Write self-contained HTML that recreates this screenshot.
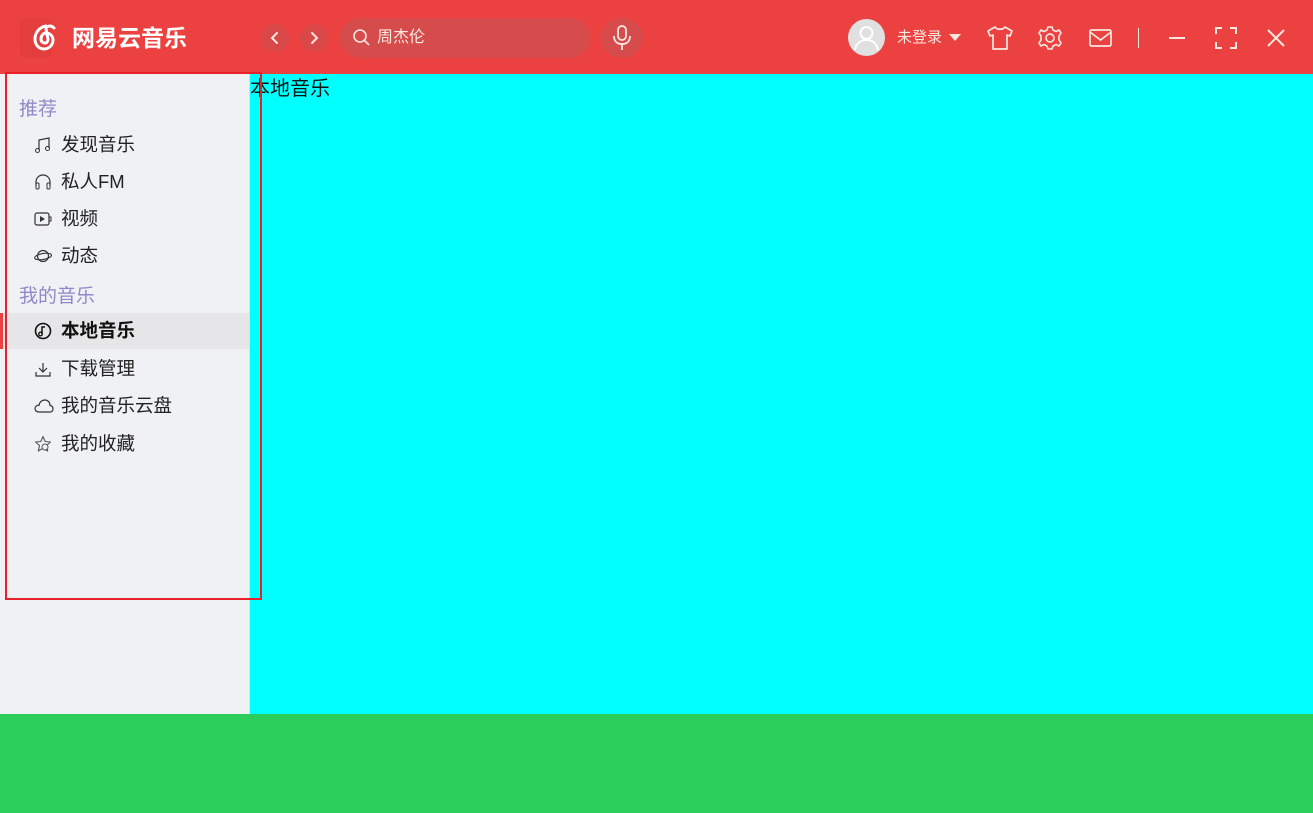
<!DOCTYPE html>
<html><head><meta charset="utf-8"><style>
*{margin:0;padding:0;box-sizing:border-box}
body{width:1313px;height:813px;overflow:hidden;position:relative;font-family:"Liberation Sans","Noto Sans CJK SC",sans-serif;background:#fff}
.hdr{position:absolute;left:0;top:0;width:1313px;height:74px;background:#ec4141}
.side{position:absolute;left:0;top:74px;width:250px;height:640px;background:#f0f1f5;border-right:1px solid #dcdde2}
.main{position:absolute;left:250px;top:74px;width:1063px;height:640px;background:#00ffff;font-size:20px;color:#111;line-height:30px}
.foot{position:absolute;left:0;top:714px;width:1313px;height:99px;background:#2bcd5b}
.box{position:absolute;left:5px;top:72px;width:257px;height:528px;border:2px solid #e8212b}
.abs{position:absolute}
.sec{position:absolute;left:19px;font-size:19px;color:#8e8ac7}
.it{position:absolute;left:0;width:249px;height:36px;font-size:18.5px;color:#222;line-height:36px}
.it svg{position:absolute;left:34px;top:9px}
.it span{position:absolute;left:61px}
.circ{position:absolute;border-radius:50%}
</style></head><body>
<div class="hdr">
 <div class="abs" style="left:20px;top:18px;width:32px;height:40px;background:#e33d3d;border-radius:6px"></div>
 <svg class="abs" style="left:30px;top:22px" width="30" height="32" viewBox="0 0 30 32"><path d="M16 4 C10 5 5 10 5 17 C5 23 9 27 14 27 C19 27 23 23 23 18 C23 14 20 11 16 11 C13 11 11 14 11 17 C11 20 13 21 15 21 C17 21 18 19 18 17 L16 7 C16 5 18 4 20 4 C22 4 23 5 24 6" fill="none" stroke="#fff" stroke-width="3" stroke-linecap="round"/></svg>
 <div class="abs" style="left:72px;top:24px;font-size:23px;color:#fff;font-weight:bold;line-height:28px">网易云音乐</div>
 <div class="circ" style="left:261px;top:24px;width:28px;height:28px;background:#d84848"></div>
 <div class="circ" style="left:300px;top:24px;width:28px;height:28px;background:#d84848"></div>
 <svg class="abs" style="left:261px;top:24px" width="28" height="28"><path d="M16 9 L11 14 L16 19" fill="none" stroke="#f7e9e0" stroke-width="2" stroke-linecap="round"/></svg>
 <svg class="abs" style="left:300px;top:24px" width="28" height="28"><path d="M12 9 L17 14 L12 19" fill="none" stroke="#f7e9e0" stroke-width="2" stroke-linecap="round"/></svg>
 <div class="abs" style="left:340px;top:18px;width:250px;height:40px;border-radius:20px;background:#d64b4b"></div>
 <svg class="abs" style="left:352px;top:28px" width="20" height="20"><circle cx="8" cy="8" r="6" fill="none" stroke="#f7e9e0" stroke-width="1.6"/><path d="M12.5 12.5 L17 17" stroke="#f7e9e0" stroke-width="1.6"/></svg>
 <div class="abs" style="left:377px;top:27px;font-size:16px;color:#f7e9e0;line-height:22px">周杰伦</div>
 <div class="circ" style="left:601px;top:18px;width:42px;height:40px;background:#d64b4b"></div>
 <svg class="abs" style="left:610px;top:24px" width="24" height="28"><rect x="8" y="2" width="8" height="14" rx="4" fill="none" stroke="#f7e9e0" stroke-width="1.8"/><path d="M4 12 C4 18 8 20 12 20 C16 20 20 18 20 12 M12 20 L12 26" fill="none" stroke="#f7e9e0" stroke-width="1.8"/></svg>
 <div class="circ" style="left:848px;top:19px;width:37px;height:37px;background:#e0e0e0;overflow:hidden"><svg width="37" height="37"><circle cx="18.5" cy="14" r="6" fill="none" stroke="#fff" stroke-width="2"/><path d="M7 31 C8 24 13 21 18.5 21 C24 21 29 24 30 31" fill="none" stroke="#fff" stroke-width="2"/></svg></div>
 <div class="abs" style="left:897px;top:28px;font-size:15px;color:#f7e9e0;line-height:20px">未登录</div>
 <svg class="abs" style="left:948px;top:32px" width="14" height="10"><path d="M1 2 L13 2 L7 9Z" fill="#f7e9e0"/></svg>
 <svg class="abs" style="left:986px;top:25px" width="28" height="26"><path d="M9 2 C11 5 17 5 19 2 L26 6 L24 11 L21 10 L21 24 L7 24 L7 10 L4 11 L2 6Z" fill="none" stroke="#f7e9e0" stroke-width="1.7" stroke-linejoin="round"/></svg>
 <svg class="abs" style="left:1037px;top:25px" width="26" height="26" viewBox="0 0 26 26"><circle cx="13" cy="13" r="4" fill="none" stroke="#f7e9e0" stroke-width="1.7"/><path d="M11 2 L15 2 L16 5 L19 6.5 L22 5 L24 8 L22 11 L22 15 L24 18 L22 21 L19 19.5 L16 21 L15 24 L11 24 L10 21 L7 19.5 L4 21 L2 18 L4 15 L4 11 L2 8 L4 5 L7 6.5 L10 5Z" fill="none" stroke="#f7e9e0" stroke-width="1.6" stroke-linejoin="round"/></svg>
 <svg class="abs" style="left:1088px;top:27px" width="26" height="22"><rect x="2" y="3" width="21" height="16" rx="1.5" fill="none" stroke="#f7e9e0" stroke-width="1.7"/><path d="M2 5 L12.5 13 L23 5" fill="none" stroke="#f7e9e0" stroke-width="1.7"/></svg>
 <div class="abs" style="left:1138px;top:28px;width:1px;height:20px;background:#f7e9e0"></div>
 <div class="abs" style="left:1169px;top:37px;width:16px;height:2px;background:#f7e9e0"></div>
 <svg class="abs" style="left:1215px;top:27px" width="22" height="22"><path d="M1 7 L1 1 L7 1 M15 1 L21 1 L21 7 M21 15 L21 21 L15 21 M7 21 L1 21 L1 15" fill="none" stroke="#f7e9e0" stroke-width="2"/></svg>
 <svg class="abs" style="left:1266px;top:28px" width="20" height="20"><path d="M2 2 L18 18 M18 2 L2 18" stroke="#f7e9e0" stroke-width="2"/></svg>
</div>
<div class="side">
 <div class="sec" style="top:20px">推荐</div>
 <div class="it" style="top:53px"><svg width="18" height="18"><path d="M5 14 L5 4 L15 2 L15 12" fill="none" stroke="#333" stroke-width="1.2"/><circle cx="3.5" cy="14.5" r="2" fill="none" stroke="#333"/><circle cx="13.5" cy="12.5" r="2" fill="none" stroke="#333"/></svg><span>发现音乐</span></div>
 <div class="it" style="top:90px"><svg width="18" height="18"><path d="M2 13 L2 9 C2 5 5 2 9 2 C13 2 16 5 16 9 L16 13" fill="none" stroke="#333" stroke-width="1.2"/><rect x="2" y="10" width="3" height="6" rx="1" fill="none" stroke="#333"/><rect x="13" y="10" width="3" height="6" rx="1" fill="none" stroke="#333"/></svg><span>私人FM</span></div>
 <div class="it" style="top:127px"><svg width="18" height="18"><rect x="1" y="3" width="14" height="12" rx="2" fill="none" stroke="#333" stroke-width="1.2"/><path d="M6 6 L11 9 L6 12Z" fill="#333"/><path d="M15 7 L17 7 L17 11 L15 11" fill="none" stroke="#333"/></svg><span>视频</span></div>
 <div class="it" style="top:164px"><svg width="20" height="18"><circle cx="9" cy="9" r="5.5" fill="none" stroke="#333" stroke-width="1.2"/><ellipse cx="9" cy="9.5" rx="8.5" ry="3" fill="none" stroke="#333" stroke-width="1.1" transform="rotate(-10 9 9)"/></svg><span>动态</span></div>
 <div class="sec" style="top:207px">我的音乐</div>
 <div class="it" style="top:239px;background:#e6e6e8"><div class="abs" style="left:0;top:0;width:3px;height:36px;background:#ec4141"></div><svg width="18" height="18"><circle cx="9" cy="9" r="7.5" fill="none" stroke="#111" stroke-width="1.6"/><path d="M8 12 L8 5 L11 5" fill="none" stroke="#111" stroke-width="1.5"/><circle cx="6.5" cy="12" r="1.8" fill="none" stroke="#111" stroke-width="1.3"/></svg><span style="font-weight:bold;color:#111">本地音乐</span></div>
 <div class="it" style="top:277px"><svg width="18" height="18"><path d="M9 3 L9 12 M5 8 L9 12 L13 8 M2 12 L2 16 L16 16 L16 12" fill="none" stroke="#333" stroke-width="1.2"/></svg><span>下载管理</span></div>
 <div class="it" style="top:314px"><svg width="20" height="18"><path d="M5 15 C2 15 1 13 1 11.5 C1 9.5 3 8 5 8.3 C5.5 5 8 3 11 3 C14 3 16 5.5 16 8.5 C18 8.7 19 10 19 12 C19 14 17.5 15 16 15Z" fill="none" stroke="#333" stroke-width="1.2"/></svg><span>我的音乐云盘</span></div>
 <div class="it" style="top:352px"><svg width="18" height="18"><path d="M9 1.5 L11.2 6.5 L16.5 7 L12.5 10.5 L13.7 16 L9 13.2 L4.3 16 L5.5 10.5 L1.5 7 L6.8 6.5Z" fill="none" stroke="#555" stroke-width="1.1" stroke-linejoin="round"/><circle cx="11" cy="12" r="3" fill="#f0f1f5" stroke="#555"/></svg><span>我的收藏</span></div>
</div>
<div class="main">本地音乐</div>
<div class="foot"></div>
<div class="box"></div>
</body></html>
